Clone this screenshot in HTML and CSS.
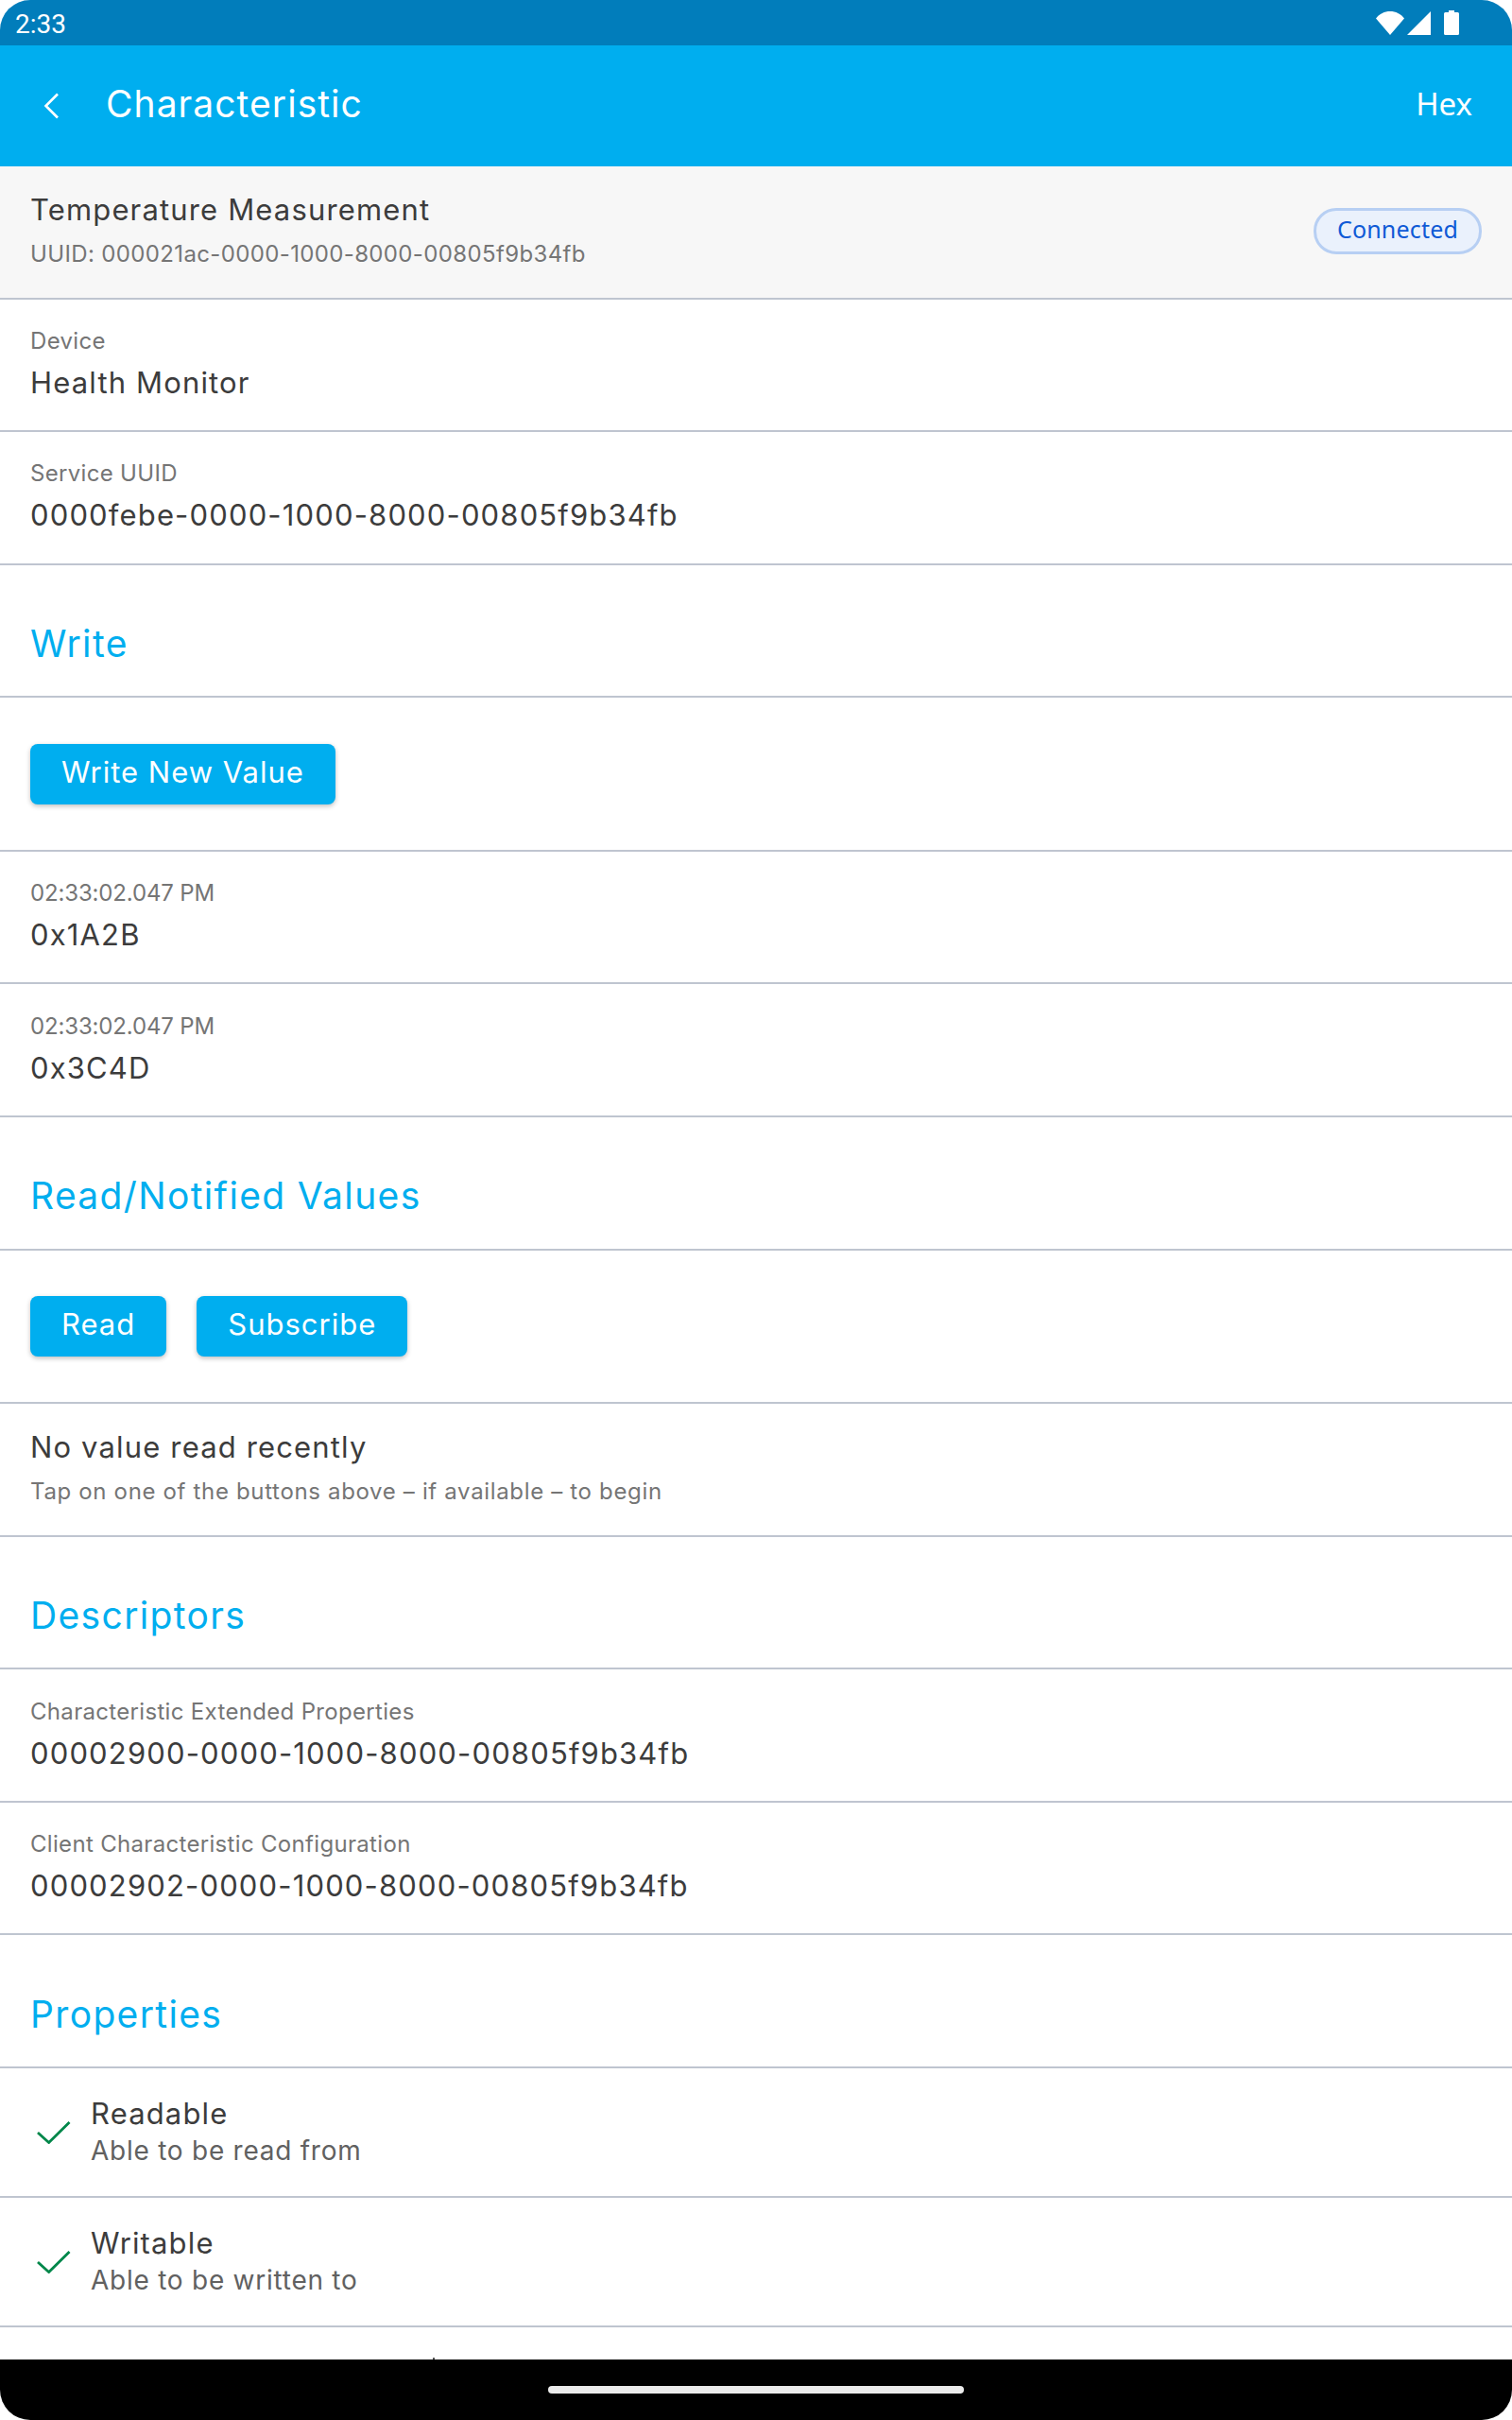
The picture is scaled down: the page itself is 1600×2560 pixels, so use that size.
FILE: index.html
```html
<!DOCTYPE html>
<html lang="en">
<head>
<meta charset="utf-8">
<title>Characteristic</title>
<link rel="stylesheet" href="styles.css">
</head>
<body>
<div class="screen">
  <div class="status">
    <span class="time">2:33</span>
    <div class="status-icons">
      <svg class="ic-wifi" viewBox="0 0 30 26"><path d="M0 8.5C3.8 3.6 9 1 15 1s11.200 2.600 15 7.500L15 26z" fill="#fff"/></svg>
      <svg class="ic-signal" viewBox="0 0 25 25"><path d="M25 0v25H0z" fill="#fff"/></svg>
      <svg class="ic-batt" viewBox="0 0 16 26"><path d="M5 0h6v2h3.500a1.500 1.500 0 0 1 1.500 1.500V24.500a1.500 1.500 0 0 1-1.500 1.500H1.500A1.500 1.500 0 0 1 0 24.500V3.500A1.500 1.500 0 0 1 1.500 2H5z" fill="#fff"/></svg>
    </div>
  </div>
  <header class="appbar">
    <svg class="ic-back" viewBox="0 0 18 28"><path d="M16 1.500 3.500 14 16 26.500" fill="none" stroke="#fff" stroke-width="2.600"/></svg>
    <span class="appbar-title">Characteristic</span>
    <span class="appbar-action">Hex</span>
  </header>
  <main class="content">
    <div class="row header-row stack-below">
      <div>
        <div class="value">Temperature Measurement</div>
        <div class="label label-below label-uuid">UUID: 000021ac-0000-1000-8000-00805f9b34fb</div>
      </div>
      <span class="badge">Connected</span>
    </div>
    <div class="row field"><div><div class="label">Device</div><div class="value">Health Monitor</div></div></div>
    <div class="row field"><div><div class="label">Service UUID</div><div class="value">0000febe-0000-1000-8000-00805f9b34fb</div></div></div>
    <div class="row section"><h2>Write</h2></div>
    <div class="row actions"><button class="btn">Write New Value</button></div>
    <div class="row field"><div><div class="label label-time">02:33:02.047 PM</div><div class="value">0x1A2B</div></div></div>
    <div class="row field"><div><div class="label label-time">02:33:02.047 PM</div><div class="value">0x3C4D</div></div></div>
    <div class="row section"><h2>Read/Notified Values</h2></div>
    <div class="row actions"><button class="btn">Read</button><button class="btn">Subscribe</button></div>
    <div class="row stack-below"><div><div class="value">No value read recently</div><div class="label label-below label-hint">Tap on one of the buttons above – if available – to begin</div></div></div>
    <div class="row section"><h2>Descriptors</h2></div>
    <div class="row field"><div><div class="label">Characteristic Extended Properties</div><div class="value">00002900-0000-1000-8000-00805f9b34fb</div></div></div>
    <div class="row field"><div><div class="label">Client Characteristic Configuration</div><div class="value">00002902-0000-1000-8000-00805f9b34fb</div></div></div>
    <div class="row section"><h2>Properties</h2></div>
    <div class="row prop">
      <svg class="ic-check" viewBox="0 0 38 26"><path d="M2 14 13.700 24.500 35.500 3" fill="none" stroke="#00874a" stroke-width="2.800"/></svg>
      <div><div class="value">Readable</div><div class="prop-sub">Able to be read from</div></div>
    </div>
    <div class="row prop">
      <svg class="ic-check" viewBox="0 0 38 26"><path d="M2 14 13.700 24.500 35.500 3" fill="none" stroke="#00874a" stroke-width="2.800"/></svg>
      <div><div class="value">Writable</div><div class="prop-sub">Able to be written to</div></div>
    </div>
  </main>
  <span class="clip-tick"></span>
  <footer class="navbar"><span class="home"></span></footer>
</div>
</body>
</html>
```
FILE: styles.css
```css
* { box-sizing: border-box; }
html, body { margin: 0; padding: 0; background: #fff; }
body { font-family: "Inter", "Liberation Sans", sans-serif; color: #3c3c3c; }
.screen { position: relative; width: 1600px; height: 2560px; display: flex; flex-direction: column; overflow: hidden; background: #fff; }
.status { flex: 0 0 48px; background: #017dbb; border-radius: 32px 32px 0 0; display: flex; align-items: center; justify-content: space-between; padding: 0 56px 0 16px; color: #fff; }
.time { font-family: "Roboto", sans-serif; font-size: 28px; padding-top: 3px; }
.status-icons { display: flex; align-items: center; gap: 3px; }
.ic-wifi { width: 30px; height: 26px; }
.ic-signal { width: 25px; height: 25px; }
.ic-batt { width: 16px; height: 26px; margin-left: 11px; }
.appbar { flex: 0 0 128px; background: #00aeef; display: flex; align-items: center; color: #fff; padding: 0 42px 0 45px; }
.ic-back { width: 18px; height: 28px; }
.appbar-title { font-size: 39px; letter-spacing: 1.050px; margin-left: 49px; padding-bottom: 5px; }
.appbar-action { margin-left: auto; font-family: "Noto Sans", sans-serif; font-size: 33px; padding-bottom: 6px; }
.content { flex: 1 1 auto; min-height: 0; overflow: hidden; }
.row { height: 140.600px; border-bottom: 2px solid #bfc5d0; padding: 0 32px; display: flex; align-items: center; }
.header-row { height: 140.500px; background: #f7f7f7; justify-content: space-between; }
.field { padding-bottom: 3px; }
.stack-below { padding-bottom: 2px; }
.label { font-size: 24px; color: #757575; line-height: 30px; letter-spacing: .32px; }
.label-uuid { letter-spacing: .36px; }
.label-time { letter-spacing: -.15px; }
.label-hint { letter-spacing: .66px; }
.label-below { margin-top: 14px; }
.value { font-size: 31px; letter-spacing: 1.150px; color: #3c3c3c; line-height: 36px; }
.label + .value { margin-top: 11px; }
.badge { font-family: "Noto Sans", sans-serif; font-size: 25px; letter-spacing: .2px; color: #0f5ad6; background: #eaf1fc; border: 3px solid #b7cff3; border-radius: 24px; height: 49px; width: 178px; display: flex; align-items: center; justify-content: center; padding-bottom: 4px; }
.section { padding-top: 27px; }
h2 { margin: 0; font-size: 39px; letter-spacing: 1.350px; font-weight: 400; color: #00aeef; }
.actions { height: 162.500px; gap: 32px; }
.btn { font: inherit; font-size: 31px; letter-spacing: 1px; height: 64px; padding: 0 33px 4px; background: #00aeef; color: #fff; border: 0; border-radius: 8px; box-shadow: 0 2px 5px rgba(0,0,0,.25); }
.prop { height: 137px; padding-bottom: 1px; }
.ic-check { width: 38px; height: 26px; margin: 0 20px 0 6px; }
.prop-sub { font-size: 28px; letter-spacing: .75px; color: #616161; line-height: 36px; margin-top: 3px; }
.clip-tick { position: absolute; left: 458px; top: 2494px; width: 2px; height: 2px; background: #555; }
.navbar { flex: 0 0 64px; background: #000; border-radius: 0 0 32px 32px; display: flex; justify-content: center; padding-top: 28px; }
.home { width: 440px; height: 8px; border-radius: 4px; background: #ebebeb; }
```
